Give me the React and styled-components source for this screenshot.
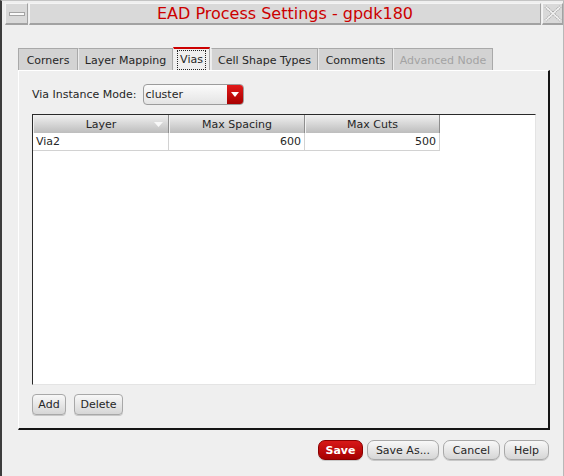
import React from 'react'
import styled, { createGlobalStyle } from 'styled-components'

const Global = createGlobalStyle`
  body {
    margin: 0;
    background: #efefef;
    font-family: "DejaVu Sans", sans-serif;
    font-size: 11px;
    color: #262626;
  }
`

const Window = styled.div`
  width: 564px;
  height: 476px;
  box-sizing: border-box;
  background: #efefef;
  border-left: 2px solid #3c3c3c;
  border-right: 1px solid #b8b8b8;
  border-top: 1px solid #c4c4c4;
  display: flex;
  flex-direction: column;
`

const TitleBar = styled.div`
  display: flex;
  gap: 1px;
  height: 22px;
  margin-top: 2px;
  padding-left: 3px;
`

const TitleButton = styled.div`
  width: ${p => p.$w}px;
  box-sizing: border-box;
  background: #d9d9d9;
  border-left: 1px solid #f4f4f4;
  border-top: 1px solid #f4f4f4;
  border-right: 1px solid #a2a2a2;
  border-bottom: 2px solid #a2a2a2;
  display: flex;
  align-items: center;
  justify-content: center;
`

const MinBar = styled.div`
  width: 14px;
  height: 2px;
  background: #fafafa;
  border: 1px solid #a4a4a4;
`

const TitleText = styled.div`
  flex: 1;
  box-sizing: border-box;
  background: #d9d9d9;
  border-left: 1px solid #f4f4f4;
  border-top: 1px solid #f4f4f4;
  border-right: 1px solid #a2a2a2;
  border-bottom: 2px solid #a2a2a2;
  color: #cc0000;
  font-size: 16px;
  display: flex;
  align-items: center;
  justify-content: center;
  padding-bottom: 1px;
`

const Body = styled.div`
  padding: 22px 0 0 16px;
  display: flex;
  flex-direction: column;
`

const TabBar = styled.div`
  display: flex;
  align-items: flex-end;
  height: 23px;
`

const Tab = styled.div`
  box-sizing: border-box;
  width: ${p => p.$w}px;
  height: ${p => (p.$active ? 23 : 22)}px;
  display: flex;
  align-items: center;
  justify-content: center;
  background: ${p => (p.$active ? '#efefef' : '#d3d3d3')};
  border: 1px solid #a9a9a9;
  border-left-color: ${p => (p.$first ? '#a9a9a9' : '#ececec')};
  border-bottom: none;
  border-top: ${p => (p.$active ? '2px solid #cc0000' : '1px solid #a9a9a9')};
  color: ${p => (p.$disabled ? '#a3a3a3' : '#262626')};
  margin-right: ${p => (p.$active ? 1 : 0)}px;
  padding-top: 1px;
`

const Focus = styled.span`
  outline: 1px dotted #222;
  outline-offset: 0;
  padding: 2px 2px 3px;
`

const Panel = styled.div`
  width: 532px;
  height: 360px;
  box-sizing: border-box;
  border-top: 1px solid #ffffff;
  border-left: 1px solid #ffffff;
  border-right: 2px solid #141414;
  border-bottom: 2px solid #141414;
  padding: 13px 0 0 13px;
  display: flex;
  flex-direction: column;
`

const ModeRow = styled.div`
  display: flex;
  align-items: center;
  height: 21px;
  gap: 6px;
`

const Combo = styled.div`
  width: 101px;
  height: 21px;
  box-sizing: border-box;
  border: 1px solid #9c9c9c;
  border-radius: 4px;
  background: linear-gradient(#fbfbfb, #e4e4e4);
  display: flex;
  align-items: center;
  overflow: hidden;
`

const ComboText = styled.span`
  flex: 1;
  padding-left: 2px;
`

const ComboArrow = styled.div`
  width: 16px;
  align-self: stretch;
  background: linear-gradient(#e21a1a, #a80000);
  display: flex;
  align-items: center;
  justify-content: center;
`

const Table = styled.div`
  margin-top: 9px;
  width: 504px;
  height: 271px;
  box-sizing: border-box;
  background: #ffffff;
  border-top: 1px solid #2a2a2a;
  border-left: 1px solid #2a2a2a;
  border-right: 1px solid #e4e4e4;
  border-bottom: 1px solid #e4e4e4;
`

const HeadRow = styled.div`
  display: flex;
  height: 18px;
`

const HeadCell = styled.div`
  width: ${p => p.$w}px;
  box-sizing: border-box;
  background: linear-gradient(#f0f0f0, #bdbdbd);
  border-right: 1px solid #8e8e8e;
  border-left: 1px solid #f2f2f2;
  display: flex;
  align-items: center;
  justify-content: center;
  position: relative;
  color: #262626;
`

const SortMark = styled.svg`
  position: absolute;
  right: 5px;
  top: 7px;
`

const Row = styled.div`
  display: flex;
  height: 18px;
`

const Cell = styled.div`
  width: ${p => p.$w}px;
  box-sizing: border-box;
  border-right: 1px solid #d2d2d2;
  border-bottom: 1px solid #d2d2d2;
  display: flex;
  align-items: center;
  justify-content: ${p => (p.$right ? 'flex-end' : 'flex-start')};
  padding: 0 3px;
`

const ButtonRow = styled.div`
  display: flex;
  gap: 8px;
  margin-top: 9px;
`

const Button = styled.button`
  height: ${p => p.$h || 21}px;
  width: ${p => p.$w}px;
  box-sizing: border-box;
  padding: 0;
  font-family: "DejaVu Sans", sans-serif;
  font-size: 11px;
  font-weight: ${p => (p.$primary ? 'bold' : 'normal')};
  color: ${p => (p.$primary ? '#ffffff' : '#262626')};
  border: 1px solid ${p => (p.$primary ? '#8a0000' : '#a8a8a8')};
  border-radius: ${p => p.$r || 4}px;
  background: ${p =>
    p.$primary
      ? 'linear-gradient(#d81818, #a60000)'
      : 'linear-gradient(#f8f8f8, #d6d6d6)'};
  box-shadow: 0 1px 0 #c8c8c8;
`

const Footer = styled.div`
  display: flex;
  justify-content: flex-end;
  gap: 4px;
  width: 532px;
  margin-top: 10px;
  padding-right: 1px;
  box-sizing: border-box;
`

const tabs = [
  { label: 'Corners', w: 60 },
  { label: 'Layer Mapping', w: 95 },
  { label: 'Vias', w: 37, active: true },
  { label: 'Cell Shape Types', w: 107 },
  { label: 'Comments', w: 75 },
  { label: 'Advanced Node', w: 100, disabled: true },
]

const cols = [
  { label: 'Layer', w: 136 },
  { label: 'Max Spacing', w: 136 },
  { label: 'Max Cuts', w: 135 },
]

export default function App() {
  return (
    <Window>
      <Global />
      <TitleBar>
        <TitleButton $w={23}>
          <MinBar />
        </TitleButton>
        <TitleText>EAD Process Settings - gpdk180</TitleText>
        <TitleButton $w={21}>
          <svg width="18" height="17" viewBox="0 0 18 17">
            <path
              d="M1.5 1.5 L16.5 15.5 M16.5 1.5 L1.5 15.5"
              stroke="#a0a0a0"
              strokeWidth="3"
              strokeDasharray="1 1"
            />
            <path d="M1.5 1.5 L16.5 15.5 M16.5 1.5 L1.5 15.5" stroke="#f6f6f6" strokeWidth="1.2" />
          </svg>
        </TitleButton>
      </TitleBar>
      <Body>
        <TabBar>
          {tabs.map((t, i) => (
            <Tab key={t.label} $w={t.w} $active={t.active} $disabled={t.disabled} $first={i === 0}>
              {t.active ? <Focus>{t.label}</Focus> : t.label}
            </Tab>
          ))}
        </TabBar>
        <Panel>
          <ModeRow>
            <span>Via Instance Mode:</span>
            <Combo>
              <ComboText>cluster</ComboText>
              <ComboArrow>
                <svg width="8" height="5" viewBox="0 0 8 5">
                  <path d="M0 0 H8 L4 5 Z" fill="#ffffff" />
                </svg>
              </ComboArrow>
            </Combo>
          </ModeRow>
          <Table>
            <HeadRow>
              {cols.map((c, i) => (
                <HeadCell key={c.label} $w={c.w}>
                  {c.label}
                  {i === 0 && (
                    <SortMark width="9" height="5" viewBox="0 0 9 5">
                      <path d="M0 0 H9 L4.5 5 Z" fill="#f8f8f8" />
                    </SortMark>
                  )}
                </HeadCell>
              ))}
            </HeadRow>
            <Row>
              <Cell $w={136}>Via2</Cell>
              <Cell $w={136} $right>600</Cell>
              <Cell $w={135} $right>500</Cell>
            </Row>
          </Table>
          <ButtonRow>
            <Button $w={34}>Add</Button>
            <Button $w={49}>Delete</Button>
          </ButtonRow>
        </Panel>
        <Footer>
          <Button $primary $w={45} $h={20} $r={7}>Save</Button>
          <Button $w={72} $h={20} $r={7}>Save As...</Button>
          <Button $w={57} $h={20} $r={7}>Cancel</Button>
          <Button $w={45} $h={20} $r={7}>Help</Button>
        </Footer>
      </Body>
    </Window>
  )
}
